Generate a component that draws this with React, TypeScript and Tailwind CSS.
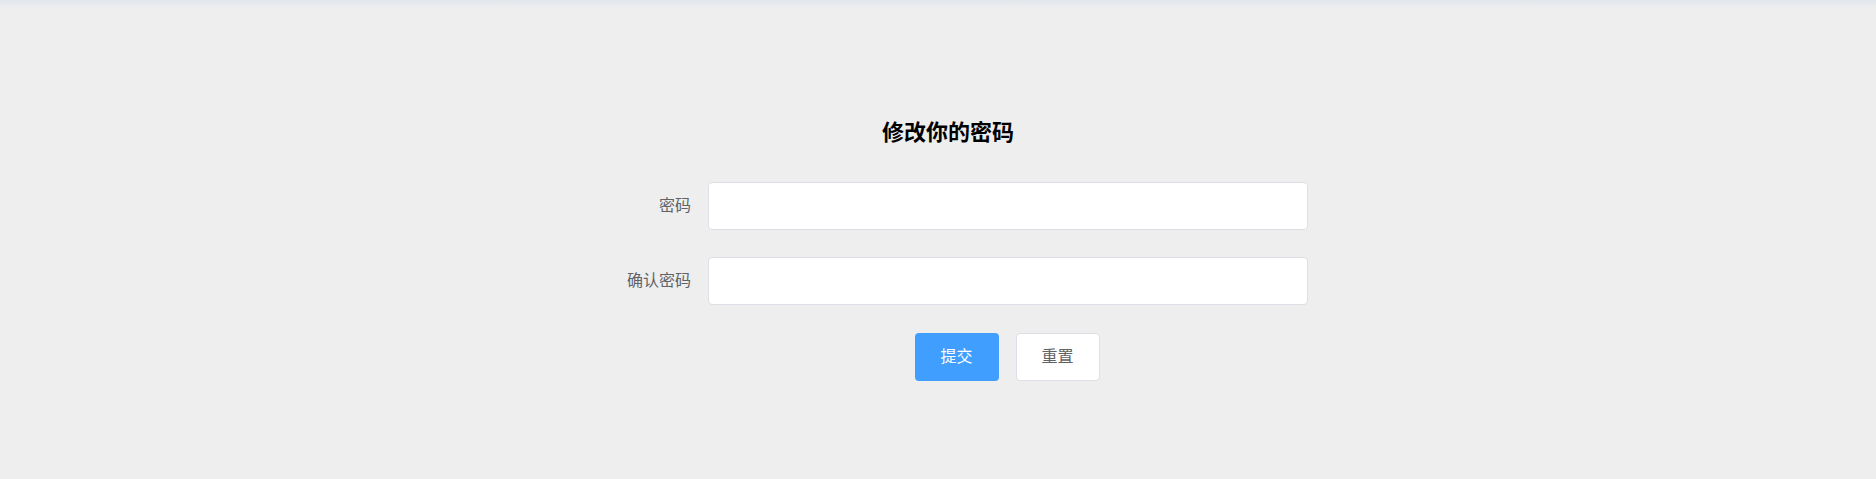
import React from "react";

function FormRow({ label }: { label: string }) {
  return (
    <div className="flex items-center mb-[27px]">
      <label className="w-[120px] shrink-0 pr-[17px] text-right text-[16px] leading-[48px] text-[#606266]">
        {label}
      </label>
      <input
        type="password"
        className="w-[600px] h-[48px] rounded-[4px] border border-[#dcdfe6] bg-white px-[15px] text-[16px] text-[#606266] outline-none focus:border-[#409eff]"
      />
    </div>
  );
}

export default function App() {
  return (
    <div
      className="relative h-[479px] w-full overflow-hidden bg-[#eeeeee]"
      style={{ fontFamily: '"Liberation Sans", "Noto Sans CJK SC", sans-serif' }}
    >
      <div className="absolute top-0 left-0 right-0 h-[8px] bg-gradient-to-b from-[#e1e6ed] to-[#eeeeee]" />
      <div className="flex justify-center pl-[20px] pt-[118px]">
        <div className="w-[720px]">
          <h2 className="mb-[34px] text-center text-[22px] leading-[30px] font-bold text-black">
            修改你的密码
          </h2>
          <FormRow label="密码" />
          <FormRow label="确认密码" />
          <div className="flex justify-center pl-[118px] pt-px">
            <div className="flex gap-[17px]">
              <button className="h-[48px] w-[84px] rounded-[4px] bg-[#409eff] text-[16px] text-white">
                提交
              </button>
              <button className="h-[48px] w-[84px] rounded-[4px] border border-[#dcdfe6] bg-white text-[16px] text-[#606266]">
                重置
              </button>
            </div>
          </div>
        </div>
      </div>
    </div>
  );
}
